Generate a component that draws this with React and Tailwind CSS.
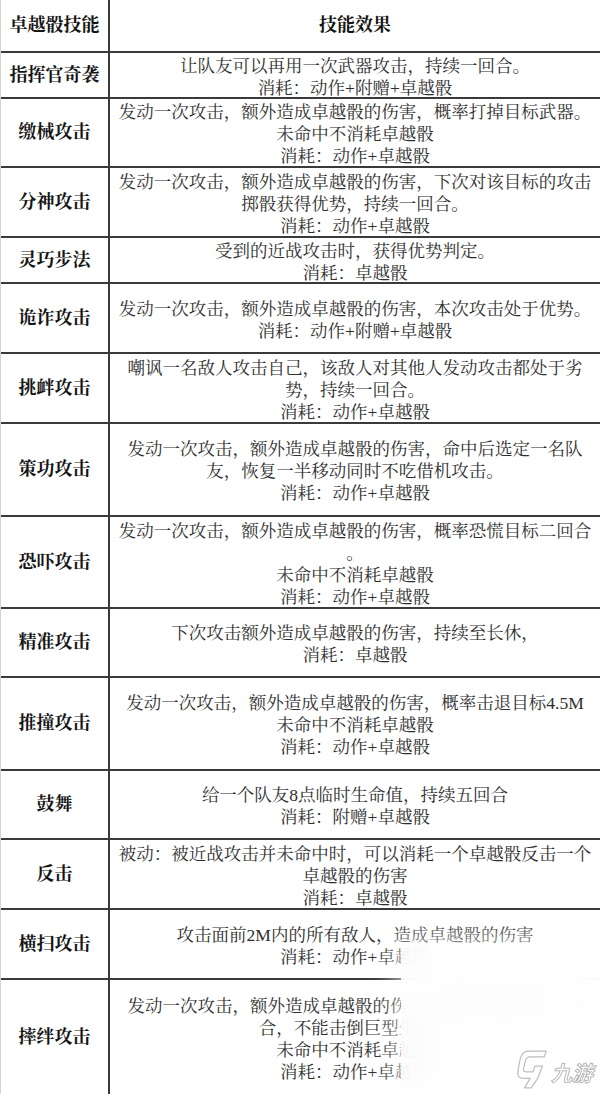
import React from 'react';

const rows = [
  { name: '指挥官奇袭', h: 'h-[46px]', lines: ['让队友可以再用一次武器攻击，持续一回合。', '消耗：动作+附赠+卓越骰'] },
  { name: '缴械攻击', h: 'h-[69px]', lines: ['发动一次攻击，额外造成卓越骰的伤害，概率打掉目标武器。', '未命中不消耗卓越骰', '消耗：动作+卓越骰'] },
  { name: '分神攻击', h: 'h-[70px]', lines: ['发动一次攻击，额外造成卓越骰的伤害，下次对该目标的攻击', '掷骰获得优势，持续一回合。', '消耗：动作+卓越骰'] },
  { name: '灵巧步法', h: 'h-[46px]', lines: ['受到的近战攻击时，获得优势判定。', '消耗：卓越骰'] },
  { name: '诡诈攻击', h: 'h-[70px]', lines: ['发动一次攻击，额外造成卓越骰的伤害，本次攻击处于优势。', '消耗：动作+附赠+卓越骰'] },
  { name: '挑衅攻击', h: 'h-[70px]', lines: ['嘲讽一名敌人攻击自己，该敌人对其他人发动攻击都处于劣', '势，持续一回合。', '消耗：动作+卓越骰'] },
  { name: '策功攻击', h: 'h-[93px]', lines: ['发动一次攻击，额外造成卓越骰的伤害，命中后选定一名队', '友，恢复一半移动同时不吃借机攻击。', '消耗：动作+卓越骰'] },
  { name: '恐吓攻击', h: 'h-[92px]', lines: ['发动一次攻击，额外造成卓越骰的伤害，概率恐慌目标二回合', '。', '未命中不消耗卓越骰', '消耗：动作+卓越骰'] },
  { name: '精准攻击', h: 'h-[69px]', lines: ['下次攻击额外造成卓越骰的伤害，持续至长休，', '消耗：卓越骰'] },
  { name: '推撞攻击', h: 'h-[93px]', lines: ['发动一次攻击，额外造成卓越骰的伤害，概率击退目标4.5M', '未命中不消耗卓越骰', '消耗：动作+卓越骰'] },
  { name: '鼓舞', h: 'h-[69px]', lines: ['给一个队友8点临时生命值，持续五回合', '消耗：附赠+卓越骰'] },
  { name: '反击', h: 'h-[70px]', lines: ['被动：被近战攻击并未命中时，可以消耗一个卓越骰反击一个', '卓越骰的伤害', '消耗：卓越骰'] },
  { name: '横扫攻击', h: 'h-[70px]', lines: ['攻击面前2M内的所有敌人，造成卓越骰的伤害', '消耗：动作+卓越骰'] },
];

const font = "font-['Liberation_Serif','Noto_Serif_CJK_SC','Noto_Sans_CJK_SC',serif]";

function Row({ name, h, lines, last }) {
  return (
    <div className={`flex ${h} ${last ? '' : 'border-b-2 border-[#3a3a3a]'}`}>
      <div className="w-[109px] shrink-0 border-r-2 border-[#3a3a3a] flex items-center justify-center text-[18px] font-bold text-[#141414]">
        {name}
      </div>
      <div className="flex-1 flex flex-col items-center justify-center pt-[3px] text-[17.5px] leading-[22px] text-[#2e2e2e] whitespace-nowrap">
        {lines.map((l, i) => (
          <div key={i}>{l}</div>
        ))}
      </div>
    </div>
  );
}

function Watermark() {
  return (
    <div className="absolute left-[400px] top-[943px] w-[200px] h-[151px]">
      <div className="absolute inset-0 backdrop-blur-md bg-white/80" />
      <div className="absolute -inset-2 bg-white/60 blur-md" />
      <div className="absolute right-[6px] bottom-[4px] flex items-end gap-[2px]">
        <svg width="32" height="42" viewBox="0 0 34 44" fill="none" stroke="#bdbdbd" strokeWidth="1.3" strokeLinejoin="round">
          <path d="M12 3 L31 3 L29 9 L14 9 Q10 9 9 13 L7 21 Q6 25 10 25 L17 25 L19 19 L27 19 L22 32 L15 42 L8 42 L14 32 L7 32 Q0 32 1 24 L3 13 Q5 3 12 3 Z" />
        </svg>
        <span className="pb-[7px] pr-[2px] text-[21px] leading-none italic font-bold text-white [-webkit-text-stroke:1px_#b8b8b8] font-['Noto_Sans_CJK_SC',sans-serif]">
          九游
        </span>
      </div>
    </div>
  );
}

export default function App() {
  return (
    <div className={`relative w-[600px] h-[1094px] overflow-hidden bg-white border-l border-[#d4d4d4] ${font}`}>
      {/* Header */}
      <div className="flex h-[53px] border-b-2 border-[#3a3a3a]">
        <div className="w-[109px] shrink-0 border-r-2 border-[#3a3a3a] flex items-center justify-center text-[18px] font-bold text-[#141414]">
          卓越骰技能
        </div>
        <div className="flex-1 flex items-center justify-center text-[18px] font-bold text-[#141414]">
          技能效果
        </div>
      </div>

      {rows.map((r) => (
        <Row key={r.name} {...r} />
      ))}

      <Row
        name="摔绊攻击"
        h="h-[115px]"
        last
        lines={['发动一次攻击，额外造成卓越骰的伤害，概率击倒目标一回', '合，不能击倒巨型生物。', '未命中不消耗卓越骰', '消耗：动作+卓越骰']}
      />

      <Watermark />
    </div>
  );
}
